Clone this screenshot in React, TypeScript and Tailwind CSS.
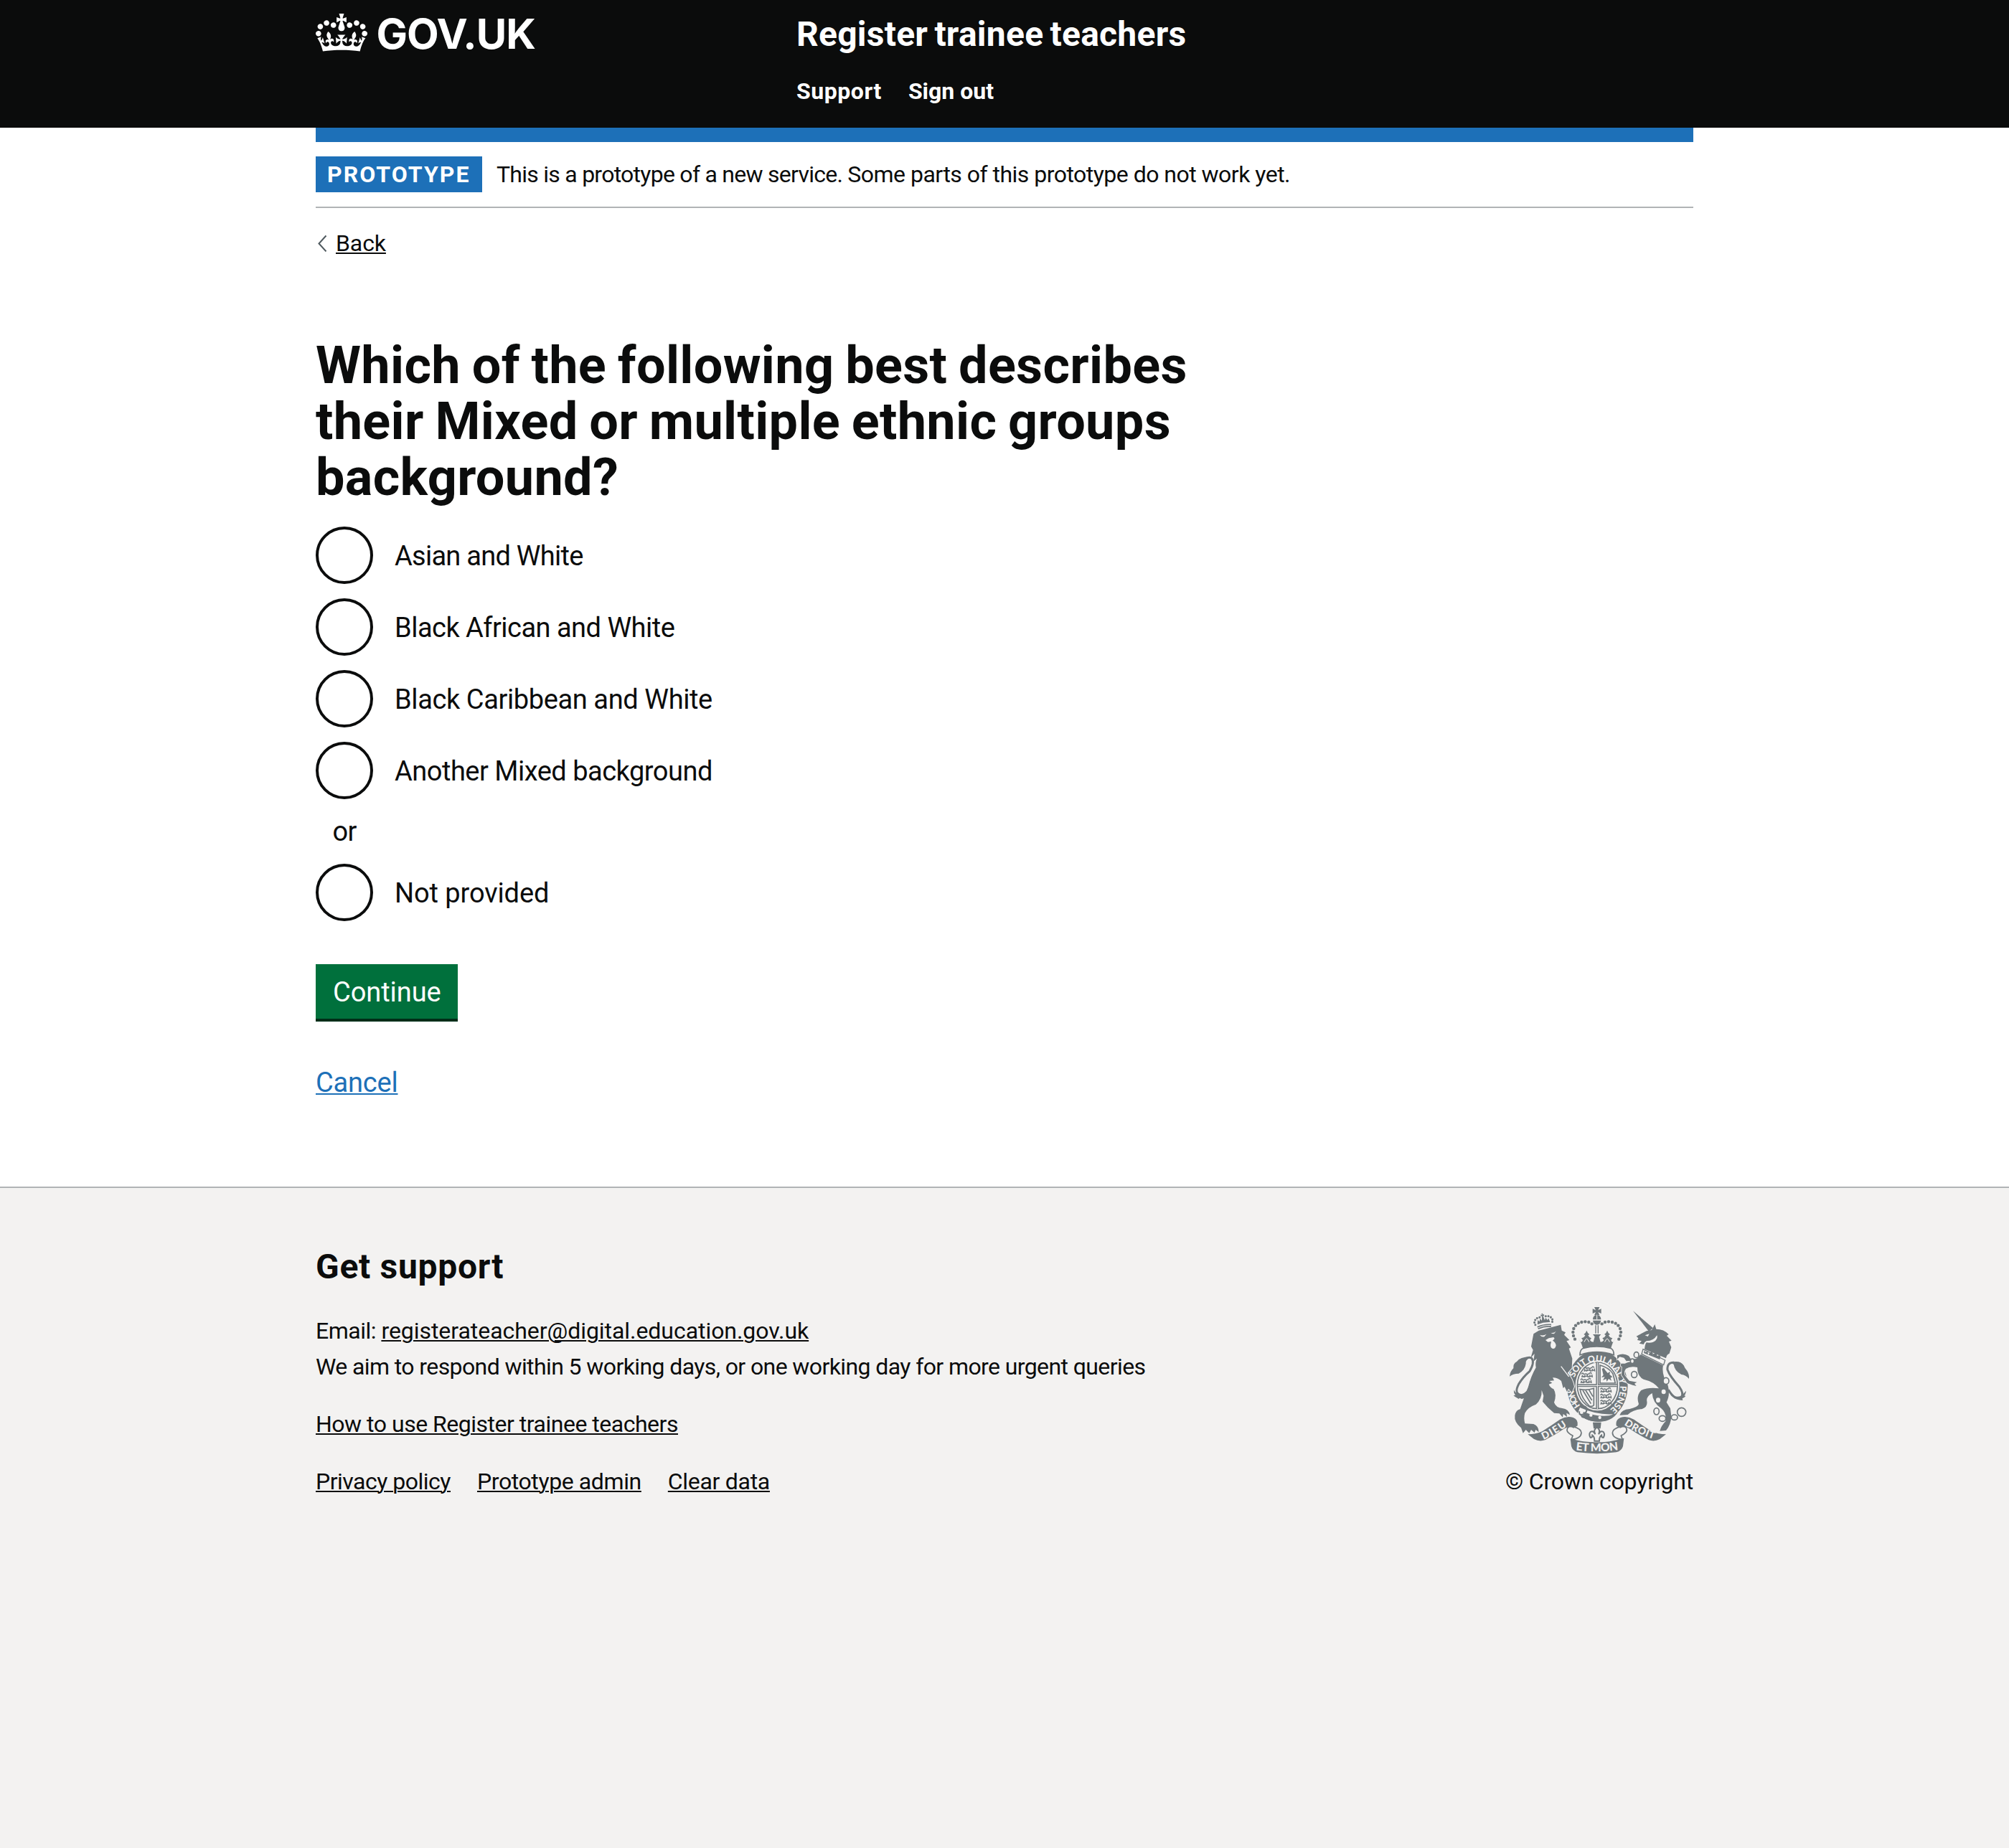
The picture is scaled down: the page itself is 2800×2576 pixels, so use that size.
const mirror = "translate(874 0) scale(-1 1)";

function Crown() {
  return (
    <svg viewBox="0 0 132 97" className="h-[53px] w-[72px] shrink-0 fill-white" aria-hidden="true">
      <path
        fillRule="evenodd"
        d="M25 30.2c3.5 1.5 7.7-.2 9.1-3.7 1.5-3.6-.2-7.8-3.9-9.2-3.6-1.4-7.6.3-9.1 3.9-1.4 3.5.3 7.5 3.9 9zM9 39.5c3.6 1.5 7.8-.2 9.2-3.7 1.5-3.6-.2-7.8-3.9-9.1-3.6-1.5-7.6.2-9.1 3.8-1.4 3.5.3 7.5 3.8 9zM4.4 57.2c3.5 1.5 7.7-.2 9.1-3.8 1.5-3.6-.2-7.7-3.9-9.1-3.5-1.5-7.6.3-9.1 3.8-1.4 3.5.3 7.6 3.9 9.1zm38.3-21.4c3.5 1.5 7.7-.2 9.1-3.8 1.5-3.6-.2-7.7-3.9-9.1-3.6-1.5-7.6.3-9.1 3.8-1.3 3.6.4 7.7 3.9 9.1zm64.4-5.6c-3.6 1.5-7.8-.2-9.1-3.7-1.5-3.6.2-7.8 3.8-9.2 3.6-1.4 7.7.3 9.2 3.9 1.3 3.5-.4 7.5-3.9 9zm15.9 9.3c-3.6 1.5-7.7-.2-9.1-3.7-1.5-3.6.2-7.8 3.7-9.1 3.6-1.5 7.7.2 9.2 3.8 1.5 3.5-.3 7.5-3.8 9zm4.7 17.7c-3.6 1.5-7.8-.2-9.2-3.8-1.5-3.6.2-7.7 3.9-9.1 3.6-1.5 7.7.3 9.2 3.8 1.3 3.5-.4 7.6-3.9 9.1zM89.3 35.8c-3.6 1.5-7.8-.2-9.2-3.8-1.4-3.6.2-7.7 3.9-9.1 3.6-1.5 7.7.3 9.2 3.8 1.4 3.6-.3 7.7-3.9 9.1zM69.7 17.7l8.9 4.7V9.3l-8.9 2.8c-.2-.3-.5-.6-.9-.9L72.4 0H59.6l3.5 11.2c-.3.3-.6.5-.9.9l-8.8-2.8v13.1l8.8-4.7c.3.3.6.7.9.9l-5 15.4v.1c-.2.8-.4 1.6-.4 2.4 0 4.1 3.1 7.5 7 8.1h.2c.3 0 .7.1 1 .1.4 0 .7 0 1-.1h.2c4-.6 7.1-4.1 7.1-8.1 0-.8-.1-1.7-.4-2.4V34l-5.1-15.4c.4-.2.7-.6 1-.9zM66 92.8c16.9 0 32.8 1.1 47.1 3.2 4-16.9 8.9-26.7 14-33.5l-9.6-3.4c1 4.9 1.1 7.2 0 10.2-1.5-1.4-3-4.3-4.2-8.7L108.6 76c2.8-2 5-3.2 7.5-3.3-4.4 9.4-10 11.9-13.6 11.2-4.3-.8-6.3-4.6-5.6-7.9 1-4.7 5.7-5.9 8-.5 4.3-8.7-3-11.4-7.6-8.8 7.1-7.2 7.9-13.5 2.1-21.1-8 6.1-8.1 12.3-4.5 20.8-4.7-5.4-12.1-2.5-9.5 6.2 3.4-5.2 7.9-2 7.2 3.1-.6 4.3-6.4 7.8-13.5 7.2-10.3-.9-10.9-8-11.2-13.8 2.5-.5 7.1 1.8 11 7.3L80.2 60c-4.1 4.4-8 5.3-12.3 5.4 1.4-4.4 8-11.6 8-11.6H55.5s6.4 7.2 7.9 11.6c-4.2-.1-8-1-12.3-5.4l1.4 16.4c3.9-5.5 8.5-7.7 10.9-7.3-.3 5.8-.9 12.8-11.1 13.8-7.2.6-12.9-2.9-13.5-7.2-.7-5 3.8-8.3 7.1-3.1 2.7-8.7-4.6-11.6-9.4-6.2 3.7-8.5 3.6-14.7-4.6-20.8-5.8 7.6-5 13.9 2.2 21.1-4.7-2.6-11.9.1-7.7 8.8 2.3-5.5 7.1-4.2 8.1.5.7 3.3-1.3 7.1-5.7 7.9-3.5.7-9-1.8-13.5-11.2 2.5.1 4.7 1.3 7.5 3.3l-4.7-15.4c-1.2 4.4-2.7 7.2-4.3 8.7-1.1-3-.9-5.3 0-10.2l-9.5 3.4c5 6.9 9.9 16.7 14 33.5 14.8-2.1 30.8-3.2 47.7-3.2z"
      />
    </svg>
  );
}

const beads: [number, number][] = [
  [345, 200], [339, 186], [337, 171], [340, 156], [348, 143], [359, 134], [373, 129], [388, 127], [403, 129], [416, 136],
];

function CrownHalf() {
  return (
    <g>
      {beads.map(([x, y]) => (
        <circle key={`${x}-${y}`} cx={x} cy={y} r="6.6" />
      ))}
      <path d="M360 194l9 20q8-2 9-10l-6-8q12-2 16-12l-6-4q8-4 12-16 4 12 12 16l-6 4q4 10 14 12l-6 8q4 8 14 8l6-22-8-10h18v60q-32 0-56 8-8-30-22-54z" />
      <path d="M384 212q6-14 10-14t10 14" fill="none" stroke="#f3f2f1" strokeWidth="3" />
    </g>
  );
}

function Lions({ x, y }: { x: number; y: number }) {
  return (
    <g transform={`translate(${x} ${y})`}>
      <path
        d="M0 3l6-4 5 5 8-2 6 3 8-4 5-4 6 4M5 7l-3 10M15 8l-5 9M25 7l4 10M37 6l-4 10M44 5l2 12M2 12l10 3 8-4 10 4 14-3"
        fill="none"
        stroke="#6f777b"
        strokeWidth="4.5"
      />
    </g>
  );
}

function RoyalArms({ className }: { className: string }) {
  return (
    <svg viewBox="72 66 750 612" className={`overflow-visible ${className}`} fill="#6f777b" aria-hidden="true">
      {/* garter and shield */}
      <ellipse cx="439" cy="396" rx="127" ry="149" />
      <ellipse cx="439" cy="394" rx="92" ry="105" fill="#f3f2f1" />
      <ellipse cx="439" cy="394" rx="84" ry="97" fill="#f3f2f1" stroke="#6f777b" strokeWidth="5" />
      <path d="M439 298v194M357 394h164" stroke="#6f777b" strokeWidth="12" />
      <path d="M439 298v194M357 394h164" stroke="#f3f2f1" strokeWidth="3" />
      <Lions x={382} y={318} />
      <Lions x={372} y={343} />
      <Lions x={368} y={367} />
      <Lions x={451} y={406} />
      <Lions x={451} y={431} />
      <Lions x={451} y={456} />
      <path d="M450 309q38 10 54 36l10 39h-64z" fill="none" stroke="#6f777b" strokeWidth="5" />
      <path d="M458 324l8-4 6 10 10 12 10-6-2 12 12 10-8 4 4 12-12-8-8 12-2-12-14 6 8-14-14 2 8-10z" />
      <path d="M366 410q30 6 58-4v70q-6 8-18 4-32-30-40-70zM378 414l34 56M390 414l26 42M404 412l16 28" fill="none" stroke="#6f777b" strokeWidth="5" />
      <path d="M366 486q66 30 132 28l18 4-14 12-62 8-84-26z" fill="#f3f2f1" />
      <path d="M380 504q58 22 108 16l34-10q-18 24-48 32-52 10-96-14z" />
      <path d="M372 482q24-6 22 16-2 14-20 18-14 0-10-14M374 516q-4 12 10 10" fill="none" stroke="#6f777b" strokeWidth="6" />
      <g fill="#f3f2f1">
        <circle cx="412" cy="518" r="6.5" />
        <circle cx="449" cy="528" r="6.5" />
      </g>
      <path id="honi" d="M368 478A100 112 0 0 1 340 406" fill="none" />
      <path id="motto" d="M343 362A99 110 0 1 1 494 492" fill="none" />
      <g className="font-['Lato'] font-black" fill="#f3f2f1">
        <text fontSize="36"><textPath href="#honi" textLength="72">HON</textPath></text>
        <text fontSize="37"><textPath href="#motto" textLength="388">SOIT QUI MAL Y PENSE</textPath></text>
      </g>

      {/* lion */}
      <path stroke="#f3f2f1" strokeWidth="6" paintOrder="stroke" d="M172 178l22-14 92-24 4 24 16 8-6 10 22 22-12 4 18 27-8 4 14 42-2 40-18 20q22 24 28 58l-10 24-14-16-6 14-10-22-6 6-8-30q-14-14-36-14l6 12-20 2 12 8-14 6q6 14 20 20 14 22 2 56 8 22 34 24 28 4 32 28l-14-8 2 16-16-12-2 14-14-16-22-2q-26-20-48-48l4-24-8-24q2 36-24 60-34 12-46 36-6 20 0 44l36 2q22 8 22 34l-13-10-5 12-14-12-8 14-14-14-12 14-8-22q-30-24-26-52 4-22 22-26 18-54 34-94 12-46 32-80-4-20 4-38l-14 12 4-32-16 18 10-34-8-14z" />
      <g fill="#f3f2f1">
        <path d="M198 182q14 6 28-3l-9 11q-12 2-19-8zM244 173q12 3 22-6l-8 11q-10 0-14-5z" />
        <path d="M222 204l14-8 20-4 4 6-8 8q12 6 14 20-2 14-12 14-11-2-11-16l3-14-14 2z" />
        <path d="M288 312l34 44-4 2-32-42z" />
      </g>
      <g transform="translate(214 128) rotate(-10)">
        <path d="M-30 14q30-8 60 0l-3 13q-27-7-54 0zM-3-36h6l-2 6 6-2v8l-5-2 4 20 6-10 5 12 6-8 4 18q-27-6-54 0l4-18 6 8 5-12 6 10 4-20-5 2v-8l6 2z" />
        {[[-36, 6], [-38, -4], [-33, -14], [-24, -20], [-13, -22], [13, -22], [24, -20], [33, -14], [38, -4], [36, 6]].map(([x, y]) => (
          <circle key={`${x}-${y}`} cx={x} cy={y} r="4.6" />
        ))}
        <path d="M-28 20q28-7 56 0" fill="none" stroke="#f3f2f1" strokeWidth="3" />
      </g>
      <path d="M160 388q-8 40-38 46-34-4-12-46 18-30 46-54 22-38 8-54-12-8-30 4" fill="none" stroke="#6f777b" strokeWidth="9" />
      <path d="M156 274q-40 0-54 20-16 8-14 28-14 12-16 34 14-12 38-12 26-14 30-42-2-14 14-22zM90 412q4 14 20 17l16 2 32-19q-6 36-36 38l-8-4-4 4q-16-8-22-14l8-2q-8-8-6-22z" />

      {/* unicorn */}
      <path d="M588 82l66 86 18-14z" />
      <path d="M602 188l42-22 22-4 13-24 6 20q32 0 52 22l-8 6 20 20-11 4 10 24-8 26q-12 4-14 20l-90-38q2-20 8-28 24 4 38-8 10-8 6-22-14 24-44 24-8 4-12 14l-18-4 10-10-18-4 4-8z" />
      <path d="M638 184l18-6-6 11z" fill="#f3f2f1" />
      <path stroke="#f3f2f1" strokeWidth="5" paintOrder="stroke" d="M620 264l94 46q-8 36 20 84 10 40-6 70l16 26 4 34q-2 34-22 58l-26 2q6-22 24-40 6-34-18-54-36-24-38-64-26 14-22 34 4 24-20 32-40 4-60 24l-34 2q8-24 42-26 34-8 38-20-12-34 10-58 32-14 74-8-20-28-64-38-26-12-26-50-30-6-48 6-10 14-4 28l18 22 32 6-10 6 8 10-16-4-22-8-24-34 2-34-6-4 2-10 16 0q20-10 38-6l-10-6-22 2-10-14-18-4-10 10 0-16q26-12 48 2l10 14 22-2z" />
      <path d="M630 242l92 46-6 20-92-46z" fill="#f3f2f1" stroke="#6f777b" strokeWidth="4" />
      <path d="M633 258l3-12 5 9 8-5 2 16 10-12 8-4 1 16 10-8 8-1 0 14 9-4 6 4-3 14z" />
      <g fill="#f3f2f1">
        <ellipse cx="716" cy="420" rx="9" ry="10" />
        <ellipse cx="693" cy="455" rx="9" ry="10" />
      </g>
      <g fill="#f3f2f1" stroke="#6f777b" strokeWidth="5">
        <ellipse cx="602" cy="266" rx="10" ry="12" />
        <ellipse cx="585" cy="292" rx="8" ry="10" />
        <ellipse cx="593" cy="348" rx="12" ry="13" />
        <ellipse cx="726" cy="375" rx="12" ry="14" />
        <ellipse cx="686" cy="502" rx="11" ry="14" />
        <ellipse cx="711" cy="532" rx="14" ry="12" />
        <ellipse cx="761" cy="527" rx="13" ry="11" />
        <circle cx="791" cy="505" r="18" />
      </g>
      <path d="M736 412q28 48 54 30 12-14-8-42-40-44-50-72-2-32 28-30" fill="none" stroke="#6f777b" strokeWidth="9" />
      <path d="M744 298q40-12 56 12 4 12 14 22 10 16 8 34-14-16-32-18-28-14-32-42zM742 426q18 20 48 12l20-22q-2 16-8 20l6 2q-8 10-14 10l2 8q-20 0-30-8-18-6-24-22z" />

      {/* crown */}
      <CrownHalf />
      <g transform={mirror}>
        <CrownHalf />
      </g>
      <path d="M430 142h14v34h-14z" fill="#f3f2f1" />
      <path d="M432 142v34M442 142v34" stroke="#6f777b" strokeWidth="4" />
      <path d="M426 66h22l-6 13 13-6v20l-13-6 6 13h-22l6-13-13 6V73l13 6z" />
      <path d="M420 118q0-18 17-20 17 2 17 20zM420 122h34q-2 16-17 18-15-2-17-18z" />
      <path d="M437 98v20" stroke="#f3f2f1" strokeWidth="3" />
      <path d="M366 266q0-22 14-28 57-14 114 0 14 6 14 28-71-24-142 0z" fill="#f3f2f1" stroke="#6f777b" strokeWidth="5" />

      {/* fleur-de-lis badge */}
      <path d="M420 548h35l-3 26h-29z" />
      <path
        d="M437 566l10 14q2 10-3 18 8-18 20-10 8 10 0 24-8 0-8-10-6 4-8 12l-1 12h-20l-1-12q-2-8-8-12 0 10-8 10-8-14 0-24 12-8 20 10-5-8-3-18z"
        fill="#f3f2f1"
        stroke="#6f777b"
        strokeWidth="6"
      />

      {/* scroll */}
      {["", mirror].map((t) => (
        <g key={t} transform={t || undefined}>
          <path d="M340 566q-28-6-28 16 2 10 24 22l-6 16q40-4 42-28 0-16-32-26z" fill="#f3f2f1" stroke="#6f777b" strokeWidth="5" />
          <path d="M148 598q34 0 60-12 40-26 74-50 28-16 56-8 22 8 18 34l-16 10q-22-10-42 4-38 26-78 46-24 8-46-4z" />
        </g>
      ))}
      <path d="M326 616q110 32 224-2l-4 34q-6 20-28 25-80 11-162 0-20-5-26-25z" />
      <path id="et-mon" d="M345 664q94 12 190-2" fill="none" />
      <path id="dieu" d="M214 621q50-22 104-62" fill="none" />
      <path id="droit" d="M550 558q60 40 130 62" fill="none" />
      <g className="font-['Lato'] font-black" fill="#f3f2f1">
        <text fontSize="47"><textPath href="#et-mon" startOffset="4" textLength="178">ET MON</textPath></text>
        <text fontSize="42"><textPath href="#dieu" textLength="114">DIEU</textPath></text>
        <text fontSize="42"><textPath href="#droit" textLength="138">DROIT</textPath></text>
      </g>
    </svg>
  );
}

function Radio({ label, className }: { label: string; className: string }) {
  return (
    <label className="flex h-20 items-start gap-[30px]">
      <input type="radio" name="ethnic-background" className="size-20 shrink-0 appearance-none rounded-full border-4 border-[#0b0c0c] bg-white" />
      <span className={`mt-4 whitespace-nowrap text-[38px] leading-[50px] ${className}`}>{label}</span>
    </label>
  );
}

const link = "underline decoration-2 underline-offset-2";

export default function App() {
  return (
    <div className="flex min-h-[2576px] flex-col bg-white font-['Roboto','Liberation_Sans',sans-serif] text-[32px] leading-[50px] text-[#0b0c0c]">
      <header className="h-[178px] bg-[#0b0c0c] text-white">
        <div className="mx-auto flex w-[1920px]">
          <a className="flex w-[670px] gap-3.5 pt-[19px]">
            <Crown />
            <svg viewBox="0 0 224 53" className="h-[53px] w-[224px] overflow-visible" role="img">
              <text x="-1.5" y="49" fontSize="58" letterSpacing="-0.95" fill="#fff" className="font-['Inter'] font-bold">GOV.UK</text>
            </svg>
          </a>
          <div className="pt-[23px]">
            <div className="text-[48px] font-bold leading-[49px] tracking-[0.25px] [word-spacing:-3px]">Register trainee teachers</div>
            <nav className="mt-[35px] flex gap-[37px] font-bold leading-[40px]">
              <a className="tracking-[0.55px]">Support</a>
              <a>Sign out</a>
            </nav>
          </div>
        </div>
      </header>

      <div className="mx-auto w-[1920px]">
        <div className="h-5 bg-[#1d70b8]" />
        <div className="flex gap-5 border-b-2 border-[#b1b4b6] py-5">
          <strong className="w-[232px] bg-[#1d70b8] pl-4 font-bold tracking-[2.05px] text-white">PROTOTYPE</strong>
          <span className="whitespace-nowrap tracking-[-0.52px]">
            <span className="tracking-[-0.74px]">This is a prototype of a new service. </span>
            Some parts of this prototype do not work yet.
          </span>
        </div>
        <a className="mt-[29px] flex w-fit items-center leading-[40px]">
          <svg viewBox="0 0 28 24" className="h-6 w-7" fill="none" stroke="#505a5f" strokeWidth="2" aria-hidden="true">
            <path d="M14.5 1.5L4.5 12.5l10 11" />
          </svg>
          <span className={`tracking-[-0.1px] ${link}`}>Back</span>
        </a>

        <main className="mt-28">
          <h1 className="whitespace-nowrap text-[72px] font-bold leading-[78px] tracking-[0.34px] [word-spacing:-2.5px]">
            Which of the following best describes
            <br />
            their Mixed or multiple ethnic groups
            <br />
            background?
          </h1>
          <div className="mt-[29px] flex flex-col gap-5">
            <Radio label="Asian and White" className="tracking-[-0.74px]" />
            <Radio label="Black African and White" className="tracking-[-0.52px]" />
            <Radio label="Black Caribbean and White" className="tracking-[-0.39px]" />
            <Radio label="Another Mixed background" className="tracking-[-0.5px]" />
            <div className="w-20 text-center text-[38px] leading-[50px] tracking-[-0.8px]">or</div>
            <Radio label="Not provided" className="tracking-[-0.1px]" />
          </div>
          <button className="mt-[60px] flex h-20 w-[198px] border-b-4 border-[#002d18] bg-[#00703c] pl-6 pt-3.5 text-[38px] leading-[50px] tracking-[-0.06px] text-white">
            Continue
          </button>
          <a className={`mt-[60px] block w-fit text-[38px] leading-[50px] tracking-[-0.2px] text-[#1d70b8] ${link}`}>Cancel</a>
        </main>
      </div>

      <footer className="mt-[120px] grow border-t-2 border-[#b1b4b6] bg-[#f3f2f1]">
        <div className="mx-auto flex w-[1920px] items-end justify-between pt-[85px]">
          <div className="whitespace-nowrap">
            <h2 className="text-[48px] font-bold leading-[49px] tracking-[0.7px]">Get support</h2>
            <p className="mt-10">
              <span className="tracking-[-0.5px]">Email: </span>
              <a className={`tracking-[-0.05px] ${link}`}>registerateacher@digital.education.gov.uk</a>
            </p>
            <p className="tracking-[-0.6px]">We aim to respond within 5 working days, or one working day for more urgent queries</p>
            <p className="mt-[30px]">
              <a className={`tracking-[-0.49px] ${link}`}>How to use Register trainee teachers</a>
            </p>
            <div className="mt-[30px] flex gap-[37px]">
              <a className={`tracking-[-0.5px] ${link}`}>Privacy policy</a>
              <a className={`tracking-[-0.4px] ${link}`}>Prototype admin</a>
              <a className={`tracking-[-0.3px] ${link}`}>Clear data</a>
            </div>
          </div>
          <div className="flex w-[262px] flex-col items-center">
            <RoyalArms className="h-[204px] w-[250px]" />
            <span className="mt-3.5 whitespace-nowrap tracking-[-0.18px]">© Crown copyright</span>
          </div>
        </div>
      </footer>
    </div>
  );
}
